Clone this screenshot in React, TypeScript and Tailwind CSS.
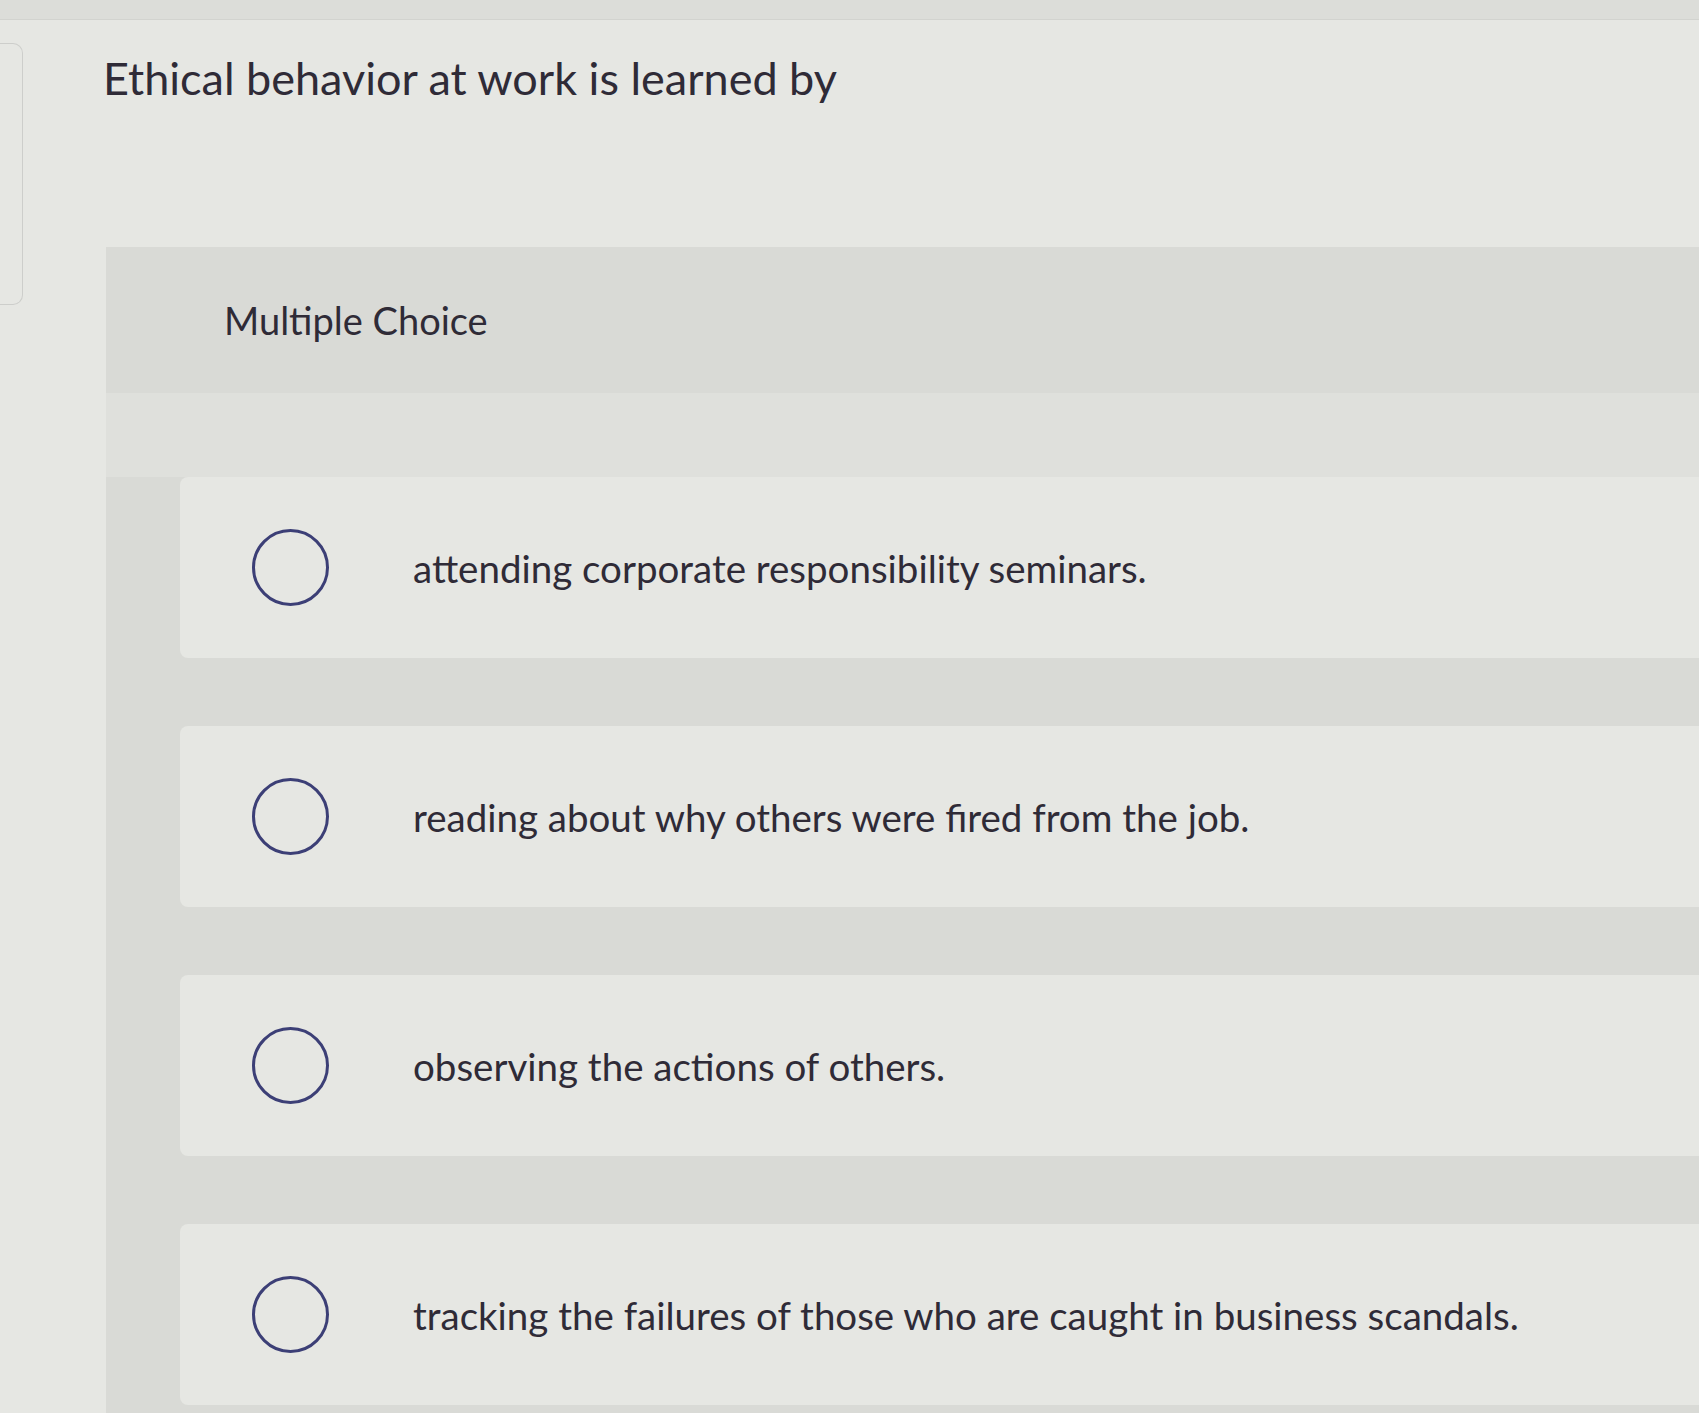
import React from 'react';

const OPTIONS = [
  'attending corporate responsibility seminars.',
  'reading about why others were fired from the job.',
  'observing the actions of others.',
  'tracking the failures of those who are caught in business scandals.',
];

function RadioOption({ label }: { label: string }) {
  return (
    <label className="flex h-[181px] cursor-pointer items-center rounded-l-[8px] bg-[#e6e7e3] pl-[72px]">
      <span className="h-[77px] w-[77px] shrink-0 rounded-full border-[3px] border-[#3c3f76]" />
      <span className="ml-[84px] text-[38.5px] leading-[46px] text-[#2f2b37]">{label}</span>
    </label>
  );
}

export default function App() {
  return (
    <div className="relative h-[1413px] w-full overflow-hidden bg-[#e6e7e3] font-['Lato','Open_Sans',sans-serif]">
      {/* top bar edge */}
      <div className="h-[20px] border-b border-[#d2d3cf] bg-[#dcddd9]" />

      {/* collapsed side drawer handle */}
      <div className="absolute left-0 top-[43px] h-[262px] w-[23px] rounded-r-[10px] border border-l-0 border-[#cdcecb]" />

      <h1 className="pl-[103px] pt-[31px] text-[45px] leading-[54px] text-[#2f2b37]">
        Ethical behavior at work is learned by
      </h1>

      {/* Question panel */}
      <section className="ml-[106px] mt-[142px] w-[1620px] bg-[#d9dad6]">
        <div className="h-[146px] pl-[118px] pt-[51px]">
          <h2 className="text-[38px] leading-[45px] text-[#2f2b37]">Multiple Choice</h2>
        </div>
        <div className="h-[84px] bg-[#dfe0dc]" />
        <div className="flex flex-col gap-[68px] pb-[68px] pl-[74px]">
          {OPTIONS.map(o => (
            <RadioOption key={o} label={o} />
          ))}
        </div>
      </section>
    </div>
  );
}
